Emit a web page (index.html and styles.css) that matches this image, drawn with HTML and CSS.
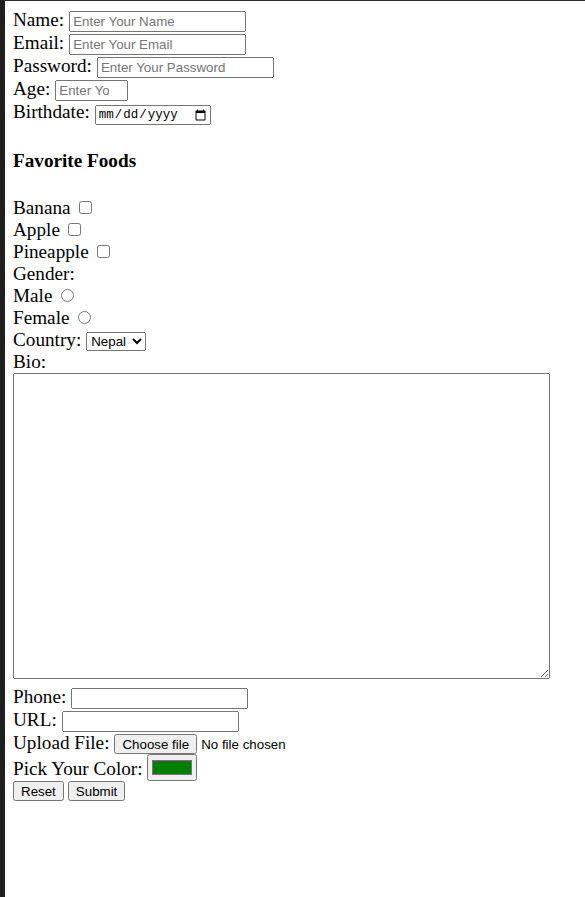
FILE: index.html
```html
<!DOCTYPE html>
<html>
<head>
<meta charset="utf-8">
<title>Form</title>
<link rel="stylesheet" href="styles.css">
</head>
<body>
<form class="form">
  <label for="name">Name:</label>
  <input type="text" id="name" class="field" placeholder="Enter Your Name"><br>
  <label for="email">Email:</label>
  <input type="email" id="email" class="field" placeholder="Enter Your Email"><br>
  <label for="password">Password:</label>
  <input type="password" id="password" class="field" placeholder="Enter Your Password"><br>
  <label for="age">Age:</label>
  <input type="number" id="age" class="age" placeholder="Enter Your Age"><br>
  <label for="birthdate">Birthdate:</label>
  <input type="date" id="birthdate" class="date"><br>
  <h3 class="heading">Favorite Foods</h3>
  <label for="banana">Banana</label>
  <input type="checkbox" id="banana"><br>
  <label for="apple">Apple</label>
  <input type="checkbox" id="apple"><br>
  <label for="pineapple">Pineapple</label>
  <input type="checkbox" id="pineapple"><br>
  <label>Gender:</label><br>
  <label for="male">Male</label>
  <input type="radio" id="male" name="gender"><br>
  <label for="female">Female</label>
  <input type="radio" id="female" name="gender"><br>
  <label for="country">Country:</label>
  <select id="country" class="select">
    <option>Nepal</option>
    <option>India</option>
    <option>China</option>
  </select><br>
  <label for="bio">Bio:</label><br>
  <textarea id="bio" class="bio"></textarea><br>
  <label for="phone">Phone:</label>
  <input type="tel" id="phone" class="field"><br>
  <label for="url">URL:</label>
  <input type="url" id="url" class="field"><br>
  <label for="file">Upload File:</label>
  <button type="button" id="file" class="btn file-btn">Choose file</button><span class="file-status">No file chosen</span><br>
  <label for="color">Pick Your Color:</label>
  <input type="color" id="color" class="color" value="#008000"><br>
  <input type="reset" class="btn" value="Reset">
  <input type="submit" class="btn" value="Submit">
</form>
</body>
</html>
```
FILE: styles.css
```css
html {
  border-left: 5px solid #1f1f1f;
  border-top: 1px solid #2b2f2b;
  min-height: 100%;
  box-sizing: border-box;
  background: #ffffff;
}
body {
  margin: 8px;
  font-family: "Liberation Serif", "Times New Roman", serif;
  font-size: 16px;
  color: #000;
}
.form label {
  font-size: 19.2px;
}
input, select, button, textarea {
  font-family: "Liberation Sans", Arial, sans-serif;
  font-size: 13.33px;
}
.field {
  box-sizing: border-box;
  width: 177px;
  height: 21px;
  margin-left: 1px;
}
.age {
  box-sizing: border-box;
  width: 73px;
  height: 21px;
  margin-left: 1px;
}
.date {
  box-sizing: border-box;
  width: 116px;
  font-family: "Liberation Mono", monospace;
  font-size: 12.5px;
  margin-left: 1px;
}
.select {
  width: 60px;
  margin-left: 1px;
}
.heading {
  font-size: 19.2px;
  margin: 25px 0;
}
.bio {
  box-sizing: border-box;
  width: 537px;
  height: 306px;
  margin-bottom: 3px;
  font-family: "Liberation Mono", monospace;
}
.btn {
  height: 20px;
  padding: 1px 6px;
}
.file-btn {
  margin-left: 1px;
}
.file-status {
  font-family: "Liberation Sans", Arial, sans-serif;
  font-size: 13.33px;
  margin-left: 4px;
}
.color {
  width: 50px;
  height: 27px;
}
```
